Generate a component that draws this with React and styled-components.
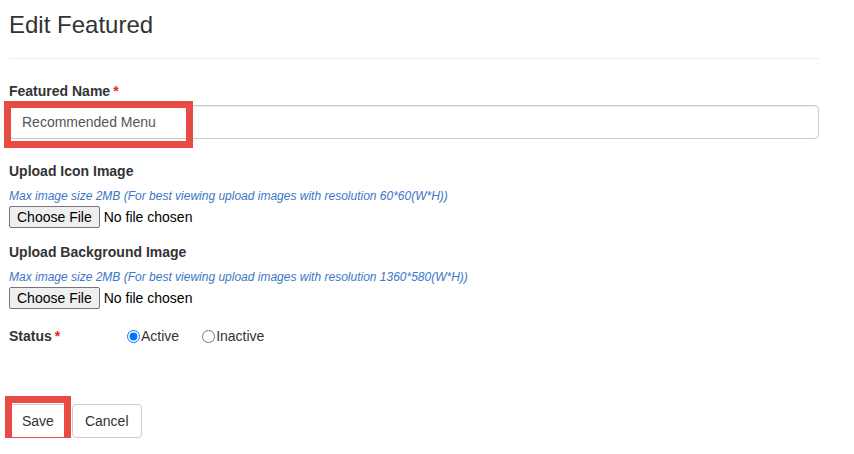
import React from "react";
import styled, { createGlobalStyle } from "styled-components";

const Global = createGlobalStyle`
  html, body { margin: 0; padding: 0; background: #fff; }
  body {
    font-family: "Liberation Sans", Arial, sans-serif;
    font-size: 14px;
    line-height: 20px;
    color: #333;
  }
  * { box-sizing: border-box; }
`;

const Page = styled.div`
  width: 810px;
  margin-left: 9px;
  padding-top: 12px;
`;

const Title = styled.h2`
  margin: 0;
  font-size: 24px;
  font-weight: 400;
  line-height: 26.4px;
  color: #333;
`;

const Rule = styled.hr`
  margin: 20px 0 21px;
  border: 0;
  border-top: 1px solid #eee;
  height: 0;
`;

const Group = styled.div`
  margin-bottom: ${(p) => p.$mb}px;
`;

const Label = styled.label`
  display: block;
  font-weight: 700;
  padding-top: ${(p) => p.$pt || 0}px;
  margin-bottom: ${(p) => p.$mb}px;
  color: #333;
`;

const Req = styled.span`
  color: #e3262b;
  margin-left: 3px;
`;

const FieldWrap = styled.div`
  position: relative;
`;

const TextInput = styled.input`
  display: block;
  width: 100%;
  height: 34px;
  padding: 6px 12px;
  font: inherit;
  font-size: 14px;
  line-height: 20px;
  color: #555;
  background: #fff;
  border: 1px solid #ccc;
  border-radius: 4px;
  box-shadow: inset 0 1px 1px rgba(0, 0, 0, 0.075);
  outline: none;
`;

const Highlight = styled.span`
  position: absolute;
  pointer-events: none;
  border: 7px solid #e84b44;
  left: ${(p) => p.$l}px;
  top: ${(p) => p.$t}px;
  width: ${(p) => p.$w}px;
  height: ${(p) => p.$h}px;
`;

const Hint = styled.div`
  font-size: 12px;
  font-style: italic;
  line-height: 19px;
  color: #3a78c8;
`;

const FileInput = styled.input`
  display: block;
  font-family: "Liberation Sans", Arial, sans-serif;
  font-size: 14px;
  line-height: normal;
  color: #000;
  &::file-selector-button {
    font: inherit;
    font-size: 14px;
    color: #000;
    background: #efefef;
    border: 1px solid #767676;
    border-radius: 2px;
    padding: 2px 7px;
    margin: 0 4px 0 0;
  }
`;

const StatusRow = styled.div`
  display: flex;
  align-items: center;
  height: 20px;
`;

const StatusLabel = styled.label`
  width: 118px;
  font-weight: 700;
`;

const Radios = styled.div`
  display: flex;
  align-items: center;
  gap: 23px;
`;

const RadioOption = styled.label`
  display: flex;
  align-items: center;
  font-weight: 400;
  color: #333;
`;

const Radio = styled.input`
  width: 13px;
  height: 13px;
  margin: 0 1px 0 0;
`;

const Actions = styled.div`
  display: flex;
  gap: 5px;
  margin-top: 58px;
`;

const BtnWrap = styled.div`
  position: relative;
`;

const Button = styled.button`
  height: 34px;
  padding: 6px 12px;
  font-family: "Liberation Sans", Arial, sans-serif;
  font-size: 14px;
  line-height: 20px;
  color: #333;
  background: #fff;
  border: 1px solid #ccc;
  border-radius: 4px;
  cursor: pointer;
`;

export default function App() {
  return (
    <>
      <Global />
      <Page>
        <Title>Edit Featured</Title>
        <Rule />
        <Group $mb={22}>
          <Label $pt={1} $mb={4}>
            Featured Name<Req>*</Req>
          </Label>
          <FieldWrap>
            <TextInput type="text" defaultValue="Recommended Menu" />
            <Highlight $l={-5} $t={-4} $w={189} $h={47} />
          </FieldWrap>
        </Group>
        <Group $mb={14}>
          <Label $mb={6}>Upload Icon Image</Label>
          <Hint>Max image size 2MB (For best viewing upload images with resolution 60*60(W*H))</Hint>
          <FileInput type="file" />
        </Group>
        <Group $mb={17}>
          <Label $mb={6}>Upload Background Image</Label>
          <Hint>Max image size 2MB (For best viewing upload images with resolution 1360*580(W*H))</Hint>
          <FileInput type="file" />
        </Group>
        <StatusRow>
          <StatusLabel>
            Status<Req>*</Req>
          </StatusLabel>
          <Radios>
            <RadioOption>
              <Radio type="radio" name="status" defaultChecked />
              Active
            </RadioOption>
            <RadioOption>
              <Radio type="radio" name="status" />
              Inactive
            </RadioOption>
          </Radios>
        </StatusRow>
        <Actions>
          <BtnWrap>
            <Button type="submit">Save</Button>
            <Highlight $l={-4} $t={-8} $w={66} $h={48} />
          </BtnWrap>
          <Button type="button">Cancel</Button>
        </Actions>
      </Page>
    </>
  );
}
